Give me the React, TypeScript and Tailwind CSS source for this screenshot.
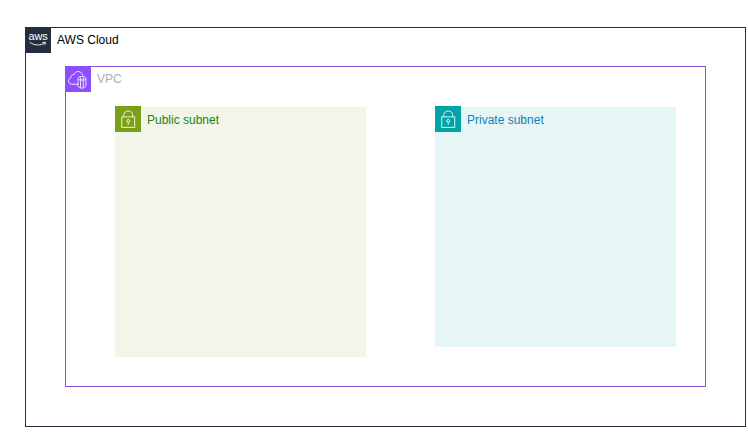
const font = { fontFamily: '"Liberation Sans", Arial, sans-serif' };

function AwsLogo() {
  return (
    <div className="relative flex h-[26px] w-[26px] shrink-0 flex-col items-center bg-[#232f3e] text-white">
      <span className="mt-[3px] text-[11px] leading-[12px] tracking-[-0.2px]">aws</span>
      <svg className="absolute left-[3px] top-[14px]" width="20" height="7" viewBox="0 0 19 7" fill="none">
        <path d="M1.5 1.5C5.5 4.6 12 4.8 16 2.2" stroke="#fff" strokeWidth="0.9" strokeLinecap="round" />
        <path d="M14.2 1.5L17 1.3L16.4 3.8" stroke="#fff" strokeWidth="0.8" strokeLinecap="round" strokeLinejoin="round" />
      </svg>
    </div>
  );
}

function VpcIcon() {
  return (
    <div className="flex h-[26px] w-[26px] shrink-0 items-center justify-center bg-[#8c4fff]">
      <svg width="26" height="26" viewBox="0 0 25 25" fill="none" stroke="#fff" strokeWidth="0.8">
        <path d="M12.5 17.5H6.6C4.6 17.5 3.4 15.9 3.4 14.3C3.4 12.8 4.3 11.7 5.6 11.3C5.5 9.3 6.9 8.1 8.4 8.4C9.2 6.3 11.1 5.1 13 5.3C15.2 5.5 16.8 7.2 17 9.1" />
        <path d="M12.5 12.1C12.5 10.8 14.3 10 16.3 10C18.3 10 20.1 10.8 20.1 12.1V18.9C20.1 20.4 18.3 21.3 16.3 21.3C14.3 21.3 12.5 20.4 12.5 18.9Z" />
        <path d="M15 11V20.9M17.6 11V20.9M12.5 12.9C13.6 13.7 19 13.7 20.1 12.9" />
      </svg>
    </div>
  );
}

function LockIcon({ bg }: { bg: string }) {
  return (
    <div className={`-mt-px flex h-[26px] w-[26px] shrink-0 items-center justify-center ${bg}`}>
      <svg width="26" height="26" viewBox="0 0 25 25" fill="none" stroke="#fff" strokeWidth="0.8">
        <rect x="6.5" y="10.5" width="12.5" height="10" />
        <path d="M8.5 10.5V8.5C8.5 6.2 10.4 4.8 12.7 4.8C15 4.8 17 6.2 17 8.5V10.5" />
        <circle cx="12.7" cy="14.4" r="1.4" />
        <path d="M12.7 15.8V18" />
      </svg>
    </div>
  );
}

export default function App() {
  return (
    <div className="h-[437px] w-[748px] overflow-hidden bg-white pl-[25px] pt-[27px]" style={font}>
      <div className="h-[400px] w-[721px] border border-[#232f3e]">
        <div className="-ml-px -mt-px flex h-[25px] items-start">
          <AwsLogo />
          <span className="ml-[6px] mt-[5px] text-[12px] leading-[16px] text-black">AWS Cloud</span>
        </div>
        <div className="ml-[39px] mt-[14px] h-[321px] w-[641px] border border-[#8a52d8]">
          <div className="-ml-px -mt-px flex h-[25px] items-start">
            <VpcIcon />
            <span className="ml-[6px] mt-[5px] text-[12px] leading-[16px] text-[#a3b1bd]">VPC</span>
          </div>
          <div className="ml-[49px] mt-[16px] flex items-start gap-[69px]">
            <section className="h-[250px] w-[251px] bg-[#f2f6e8]">
              <div className="flex items-start">
                <LockIcon bg="bg-[#7aa116]" />
                <span className="ml-[6px] mt-[5px] text-[12px] leading-[16px] text-[#1f7f10]">Public subnet</span>
              </div>
            </section>
            <section className="h-[240px] w-[241px] bg-[#e6f6f7]">
              <div className="flex items-start">
                <LockIcon bg="bg-[#01a4a6]" />
                <span className="ml-[6px] mt-[5px] text-[12px] leading-[16px] text-[#147eba]">Private subnet</span>
              </div>
            </section>
          </div>
        </div>
      </div>
    </div>
  );
}
